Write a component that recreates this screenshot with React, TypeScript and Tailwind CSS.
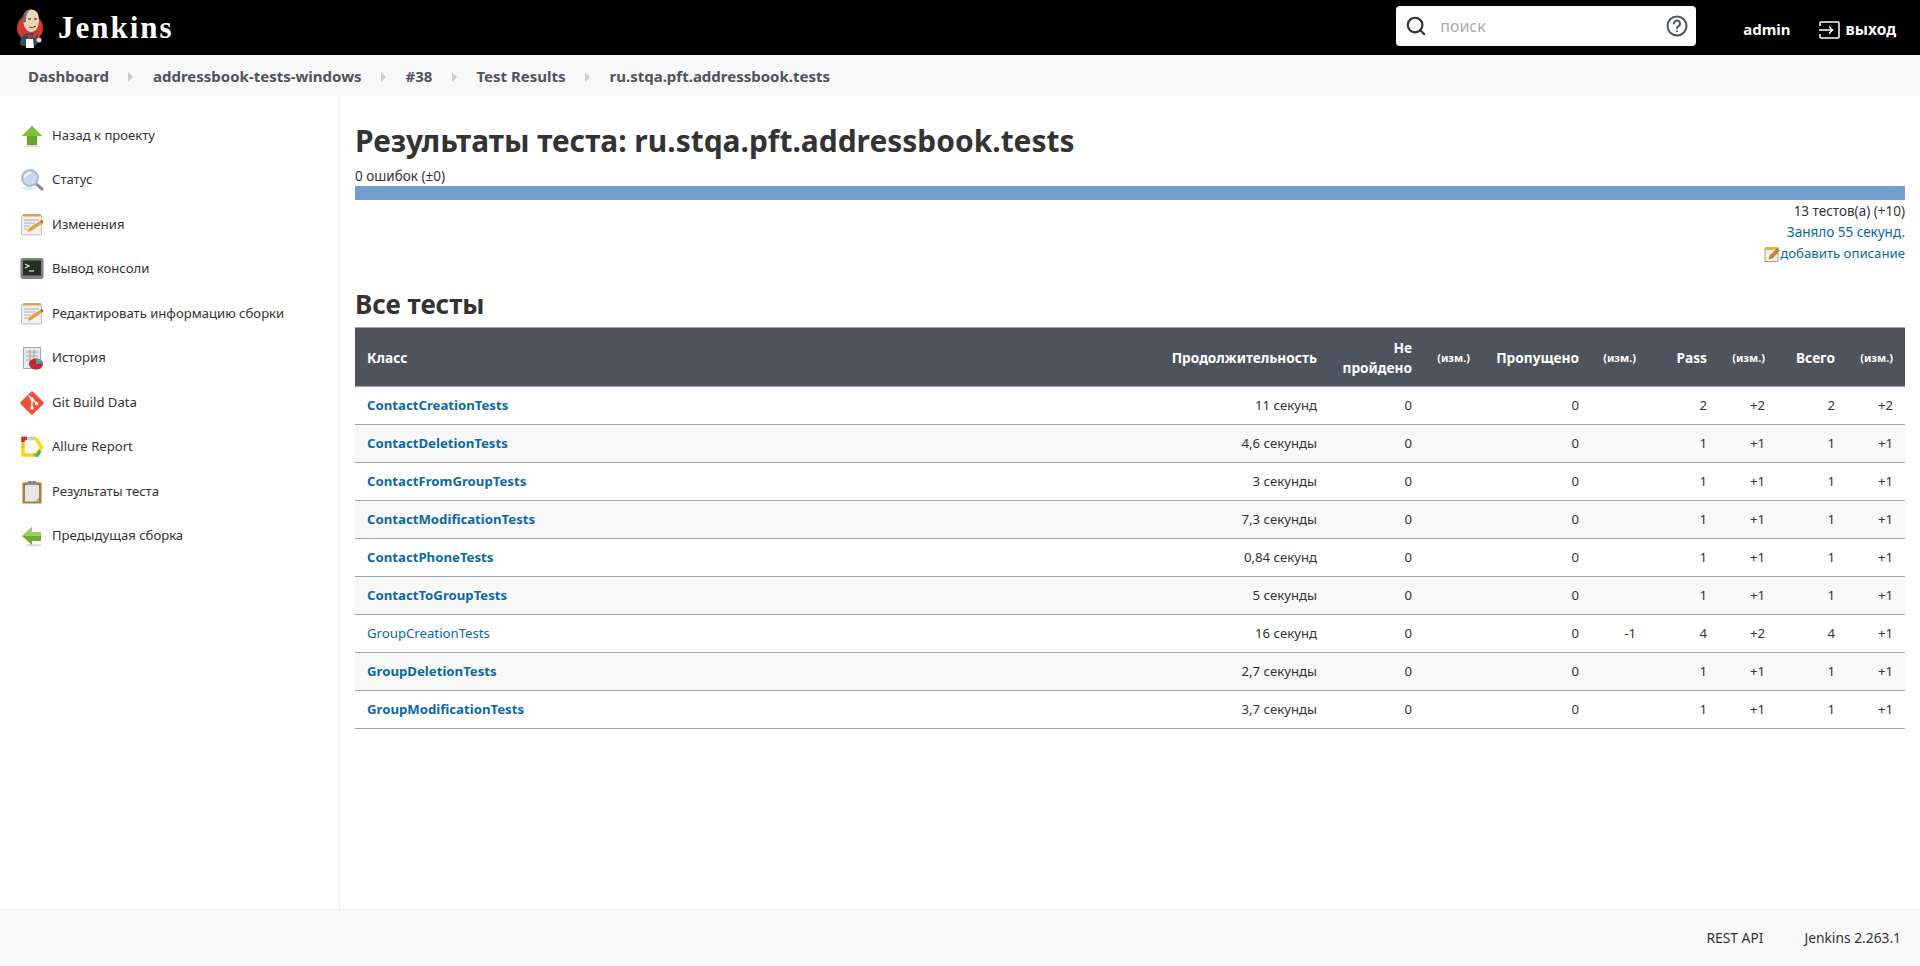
import React from 'react';
import { Search } from 'lucide-react';

const rows = [
  { name: 'ContactCreationTests', dur: '11 секунд', pass: 2, passDiff: '+2', total: 2, totalDiff: '+2' },
  { name: 'ContactDeletionTests', dur: '4,6 секунды', pass: 1, passDiff: '+1', total: 1, totalDiff: '+1' },
  { name: 'ContactFromGroupTests', dur: '3 секунды', pass: 1, passDiff: '+1', total: 1, totalDiff: '+1' },
  { name: 'ContactModificationTests', dur: '7,3 секунды', pass: 1, passDiff: '+1', total: 1, totalDiff: '+1' },
  { name: 'ContactPhoneTests', dur: '0,84 секунд', pass: 1, passDiff: '+1', total: 1, totalDiff: '+1' },
  { name: 'ContactToGroupTests', dur: '5 секунды', pass: 1, passDiff: '+1', total: 1, totalDiff: '+1' },
  { name: 'GroupCreationTests', dur: '16 секунд', skipDiff: '-1', pass: 4, passDiff: '+2', total: 4, totalDiff: '+1', plain: true },
  { name: 'GroupDeletionTests', dur: '2,7 секунды', pass: 1, passDiff: '+1', total: 1, totalDiff: '+1' },
  { name: 'GroupModificationTests', dur: '3,7 секунды', pass: 1, passDiff: '+1', total: 1, totalDiff: '+1' },
];

const UpIcon = () => (
  <svg viewBox="0 0 24 24" className="w-6 h-6">
    <ellipse cx="12" cy="22" rx="8" ry="1.2" fill="#ddd" />
    <path d="M12 2 22 12H17V21H7V12H2Z" fill="#66a81e" />
    <path d="M12 2 22 12H2Z" fill="#7fbd3a" />
  </svg>
);
const BackIcon = () => (
  <svg viewBox="0 0 24 24" className="w-6 h-6">
    <ellipse cx="14" cy="21" rx="8" ry="1.5" fill="#ddd" />
    <path d="M2 12 12 3V8H21V17H12V21Z" fill="#6fae2c" />
    <path d="M2 12 12 3V8H21V12Z" fill="#9ccc65" />
  </svg>
);
const MagnifierIcon = () => (
  <svg viewBox="0 0 24 24" className="w-6 h-6">
    <ellipse cx="9" cy="20.5" rx="8" ry="1.5" fill="#e8e8e8" />
    <path d="M15 15 22 21" stroke="#8b8f94" strokeWidth="3" strokeLinecap="round" />
    <circle cx="10" cy="10" r="8" fill="#c5daf2" stroke="#b4b8bd" strokeWidth="2" />
    <path d="M5 10A5 5 0 0 1 10 5" stroke="#fff" strokeWidth="1.5" fill="none" />
  </svg>
);
const NotepadIcon = () => (
  <svg viewBox="0 0 24 24" className="w-6 h-6">
    <rect x="1.5" y="2.5" width="20" height="19.5" rx="1" fill="#f1f0ea" stroke="#b4b2aa" strokeWidth="0.8" />
    <rect x="3" y="1" width="18" height="2.5" fill="#c9a95a" />
    <path d="M4 7H19M4 10H15M4 13H10M4 16H8" stroke="#b0b0aa" strokeWidth="1" />
    <path d="M7.5 19 9 15 20 8 22.5 10.5 11 18Z" fill="#d9a24a" />
    <path d="M20 8 22.5 10.5 23.5 9 21.5 7Z" fill="#c8402f" />
  </svg>
);
const TerminalIcon = () => (
  <svg viewBox="0 0 24 24" className="w-6 h-6">
    <rect x="0.5" y="1" width="23" height="21" rx="2.5" fill="#7f827c" />
    <rect x="3" y="3.5" width="18" height="15" fill="#243021" />
    <path d="M5 7 9 9 5 11" stroke="#e6e6e6" strokeWidth="1.2" fill="none" />
    <path d="M9 14H14" stroke="#e6e6e6" strokeWidth="1.2" />
    <rect x="16" y="19.7" width="1.5" height="1" fill="#6fd04a" />
  </svg>
);
const HistoryIcon = () => (
  <svg viewBox="0 0 24 24" className="w-6 h-6">
    <rect x="3.5" y="1.5" width="17" height="21" fill="#e8e8e6" stroke="#a8a8a6" />
    <path d="M6 6H18M6 10H18M6 14H18M10 4V20M14 4V20" stroke="#a5a5a3" strokeWidth="1.2" />
    <ellipse cx="16" cy="18" rx="7" ry="5.5" fill="#c8242a" />
    <path d="M16 18V12.5A7 5.5 0 0 1 23 18Z" fill="#4f8fc6" />
    <path d="M16 18 18.5 13A7 5.5 0 0 1 20.5 14Z" fill="#7fb341" />
  </svg>
);
const GitIcon = () => (
  <svg viewBox="0 0 24 24" className="w-6 h-6">
    <path d="M.7 11 11 .7a1.5 1.5 0 0 1 2.1 0L23.3 11a1.5 1.5 0 0 1 0 2.1L13 23.3a1.5 1.5 0 0 1-2.1 0L.7 13.1a1.5 1.5 0 0 1 0-2.1Z" fill="#f05033" />
    <path d="M8.5 4.5 12 8V17M12 8 16.5 12.5" stroke="#fff" strokeWidth="1.4" fill="none" />
    <circle cx="12" cy="8" r="1.7" fill="#fff" />
    <circle cx="12" cy="17" r="1.7" fill="#fff" />
    <circle cx="16.5" cy="12.5" r="1.7" fill="#fff" />
  </svg>
);
const AllureIcon = () => (
  <svg viewBox="0 0 24 24" className="w-6 h-6" fill="none" strokeWidth="3.5">
    <path d="M7 3.5H16" stroke="#b5dbb0" />
    <path d="M16 3.5 21.5 12 17.5 19" stroke="#fdd80c" />
    <path d="M3 13V20H13" stroke="#fdd80c" />
    <path d="M3 7V13" stroke="#eec21c" />
    <path d="M1.25 3.5H7M3 3.5V7" stroke="#e4231e" />
    <path d="M13 20H17" stroke="#9ac53c" />
    <path d="M16 20H17.5L20 15.5" stroke="#5cb045" />
  </svg>
);
const ClipboardIcon = () => (
  <svg viewBox="0 0 24 24" className="w-6 h-6">
    <rect x="2.5" y="2.5" width="19" height="21" rx="1" fill="#ad7a3c" />
    <rect x="5" y="5" width="14" height="16.5" fill="#e6e6e6" />
    <path d="M15 21.5 19 17.5V21.5Z" fill="#aaa" />
    <rect x="7.5" y="1" width="9" height="4" rx="1" fill="#8d8d88" />
  </svg>
);

const menu = [
  { icon: UpIcon, label: 'Назад к проекту' },
  { icon: MagnifierIcon, label: 'Статус' },
  { icon: NotepadIcon, label: 'Изменения' },
  { icon: TerminalIcon, label: 'Вывод консоли' },
  { icon: NotepadIcon, label: 'Редактировать информацию сборки' },
  { icon: HistoryIcon, label: 'История' },
  { icon: GitIcon, label: 'Git Build Data' },
  { icon: AllureIcon, label: 'Allure Report' },
  { icon: ClipboardIcon, label: 'Результаты теста' },
  { icon: BackIcon, label: 'Предыдущая сборка' },
];

const crumbs = ['Dashboard', 'addressbook-tests-windows', '#38', 'Test Results', 'ru.stqa.pft.addressbook.tests'];

const JenkinsLogo = () => (
  <svg viewBox="0 0 30 40" className="w-[30px] h-10 shrink-0">
    <circle cx="15" cy="20" r="13" fill="#d33833" />
    <path d="M5 36C5 29 9 25 15 25C20 25 24 28 25 32L20 38H7Z" fill="#335061" />
    <path d="M8 12C8 5 11 1.5 16 1.5C21 1.5 24 5 24 12C24 19 21 24 16 24C12 24 8 18 8 12Z" fill="#f0d6b7" />
    <path d="M8 15C6 9 9 3 15 2C11 5 11 9 11 14Z" fill="#6d6b6d" />
    <path d="M13 11H16M19 11H22" stroke="#231f20" strokeWidth="1" />
    <path d="M14 19Q17 21 21 18" stroke="#231f20" strokeWidth="0.8" fill="none" />
    <path d="M13 26 17 28 21 26V30L17 29 13 31Z" fill="#d33833" />
    <path d="M11 31H18L19 40H11Z" fill="#fff" />
    <circle cx="24" cy="32" r="2.5" fill="#f0d6b7" />
  </svg>
);

const NoteSmall = () => (
  <svg viewBox="0 0 16 16" className="w-4 h-4 shrink-0">
    <rect x="1" y="2" width="13" height="13.5" fill="#f3efd6" stroke="#8a8a80" strokeWidth="0.8" />
    <rect x="1" y="1" width="13" height="3" fill="#e0b040" />
    <path d="M5 13 6.5 9 13.5 2.5 15.5 4.5 9 11.5Z" fill="#c98a2c" stroke="#5c4a20" strokeWidth="0.5" />
  </svg>
);

const thCls = 'px-3 pt-px text-right font-bold align-middle text-[13.7px]';
const thDiffCls = 'px-3 pt-px text-right font-bold align-middle text-[11px]';
const tdCls = 'px-3 pt-px text-right align-middle';

export default function App() {
  return (
    <div className="min-h-[966px] flex flex-col bg-white text-[#333] font-['Noto_Sans',sans-serif] text-[13.2px]">
      <header className="h-[55px] bg-black flex items-center shrink-0">
        <div className="flex items-center pl-[15px]">
          <JenkinsLogo />
          <span className="ml-[13px] font-['Liberation_Serif',serif] font-bold text-[31px] leading-none tracking-[2px] text-white">Jenkins</span>
        </div>
        <div className="ml-auto w-[300px] h-10 mt-[-3px] bg-white rounded flex items-center pl-[9px] pr-[8px]">
          <Search className="w-[22px] h-[22px] text-[#333] shrink-0" strokeWidth={2.4} />
          <input placeholder="поиск" className="ml-[13px] flex-1 min-w-0 text-[16px] outline-none placeholder:text-[#aaa]" />
          <svg viewBox="0 0 22 22" className="w-[22px] h-[22px] shrink-0" fill="none" stroke="#4d545d" strokeWidth="2">
            <circle cx="11" cy="11" r="9.5" />
            <path d="M8 8.5a3 3 0 1 1 4.5 2.6c-1 .6-1.5 1.2-1.5 2.2" strokeLinecap="round" />
            <circle cx="11" cy="16.3" r="0.7" fill="#4d545d" strokeWidth="1" />
          </svg>
        </div>
        <a className="ml-[47px] mt-[4px] text-white font-bold text-[15px]">admin</a>
        <a className="ml-[28px] mr-[24px] mt-[4px] flex items-center text-white font-bold text-[15.5px]">
          <svg viewBox="0 0 21 18" className="w-[21px] h-[18px]" fill="none" stroke="#fff" strokeWidth="1.5">
            <path d="M1 5V2a1 1 0 0 1 1-1h17a1 1 0 0 1 1 1v14a1 1 0 0 1-1 1H2a1 1 0 0 1-1-1v-3" />
            <path d="M0 9H13M10 5.5 13.5 9 10 12.5" />
          </svg>
          <span className="ml-[6px]">выход</span>
        </a>
      </header>

      <nav className="h-[41px] bg-[#f8f8f8] flex items-center pl-[28px] pt-[2px] shrink-0">
        {crumbs.map((c, i) => (
          <React.Fragment key={c}>
            {i > 0 && <span className="mx-[19.5px] w-0 h-0 border-y-[5px] border-y-transparent border-l-[5px] border-l-[#ccc]" />}
            <a className="font-bold text-[#4d545d] text-[15px]">{c}</a>
          </React.Fragment>
        ))}
      </nav>

      <div className="flex flex-1">
        <aside className="w-[340px] shrink-0 border-r border-[#eee] pt-[17.5px]">
          {menu.map(({ icon: Icon, label }) => (
            <div key={label} className="h-[44.5px] flex items-center pl-[20px]">
              <Icon />
              <a className="ml-[8px] text-[13.1px] text-[#333]">{label}</a>
            </div>
          ))}
        </aside>

        <main className="flex-1 min-w-0 px-[15px] pt-[20px]">
          <h1 className="text-[29.95px] font-bold leading-[50px]">Результаты теста: ru.stqa.pft.addressbook.tests</h1>
          <div className="text-[13.5px] leading-[20px]">0 ошибок (±0)</div>
          <div className="h-[14px] bg-[#729fcf]" />
          <div className="text-right text-[13.5px] leading-[21px] mt-[1px]">
            <div>13 тестов(а) (+10)</div>
            <a className="block text-[#0b6aa2]">Заняло 55 секунд.</a>
            <a className="flex items-center justify-end text-[#0b6aa2] text-[13.2px]">
              <NoteSmall />
              добавить описание
            </a>
          </div>
          <h2 className="text-[26px] font-bold leading-[36px] mt-[22px] mb-[5px]">Все тесты</h2>
          <table className="w-full table-fixed border-collapse">
            <colgroup>
              <col />
              <col className="w-[174px]" />
              <col className="w-[95px]" />
              <col className="w-[58px]" />
              <col className="w-[109px]" />
              <col className="w-[57px]" />
              <col className="w-[71px]" />
              <col className="w-[58px]" />
              <col className="w-[70px]" />
              <col className="w-[58px]" />
            </colgroup>
            <thead>
              <tr className="h-[59px] bg-[#4d545d] text-white leading-[20px] border-y border-[#9ba7af]">
                <th className="px-3 pt-px text-left font-bold align-middle text-[13.7px]">Класс</th>
                <th className={thCls}>Продолжительность</th>
                <th className={thCls}>Не пройдено</th>
                <th className={thDiffCls}>(изм.)</th>
                <th className={thCls}>Пропущено</th>
                <th className={thDiffCls}>(изм.)</th>
                <th className={thCls}>Pass</th>
                <th className={thDiffCls}>(изм.)</th>
                <th className={thCls}>Всего</th>
                <th className={thDiffCls}>(изм.)</th>
              </tr>
            </thead>
            <tbody>
              {rows.map((r, i) => (
                <tr key={r.name} className={`h-[38px] border-b border-[#9ba7af] ${i % 2 === 1 ? 'bg-[#f8f8f8]' : 'bg-white'}`}>
                  <td className="px-3 pt-px align-middle">
                    <a className={`text-[#0b6aa2] ${r.plain ? '' : 'font-bold'}`}>{r.name}</a>
                  </td>
                  <td className={tdCls}>{r.dur}</td>
                  <td className={tdCls}>0</td>
                  <td className={tdCls}></td>
                  <td className={tdCls}>0</td>
                  <td className={tdCls}>{r.skipDiff}</td>
                  <td className={tdCls}>{r.pass}</td>
                  <td className={tdCls}>{r.passDiff}</td>
                  <td className={tdCls}>{r.total}</td>
                  <td className={tdCls}>{r.totalDiff}</td>
                </tr>
              ))}
            </tbody>
          </table>
        </main>
      </div>

      <footer className="h-[57px] shrink-0 bg-[#f8f8f8] border-t border-[#eee] flex items-center justify-end pr-[19px] text-[13.8px]">
        <a>REST API</a>
        <a className="ml-[41px]">Jenkins 2.263.1</a>
      </footer>
    </div>
  );
}
